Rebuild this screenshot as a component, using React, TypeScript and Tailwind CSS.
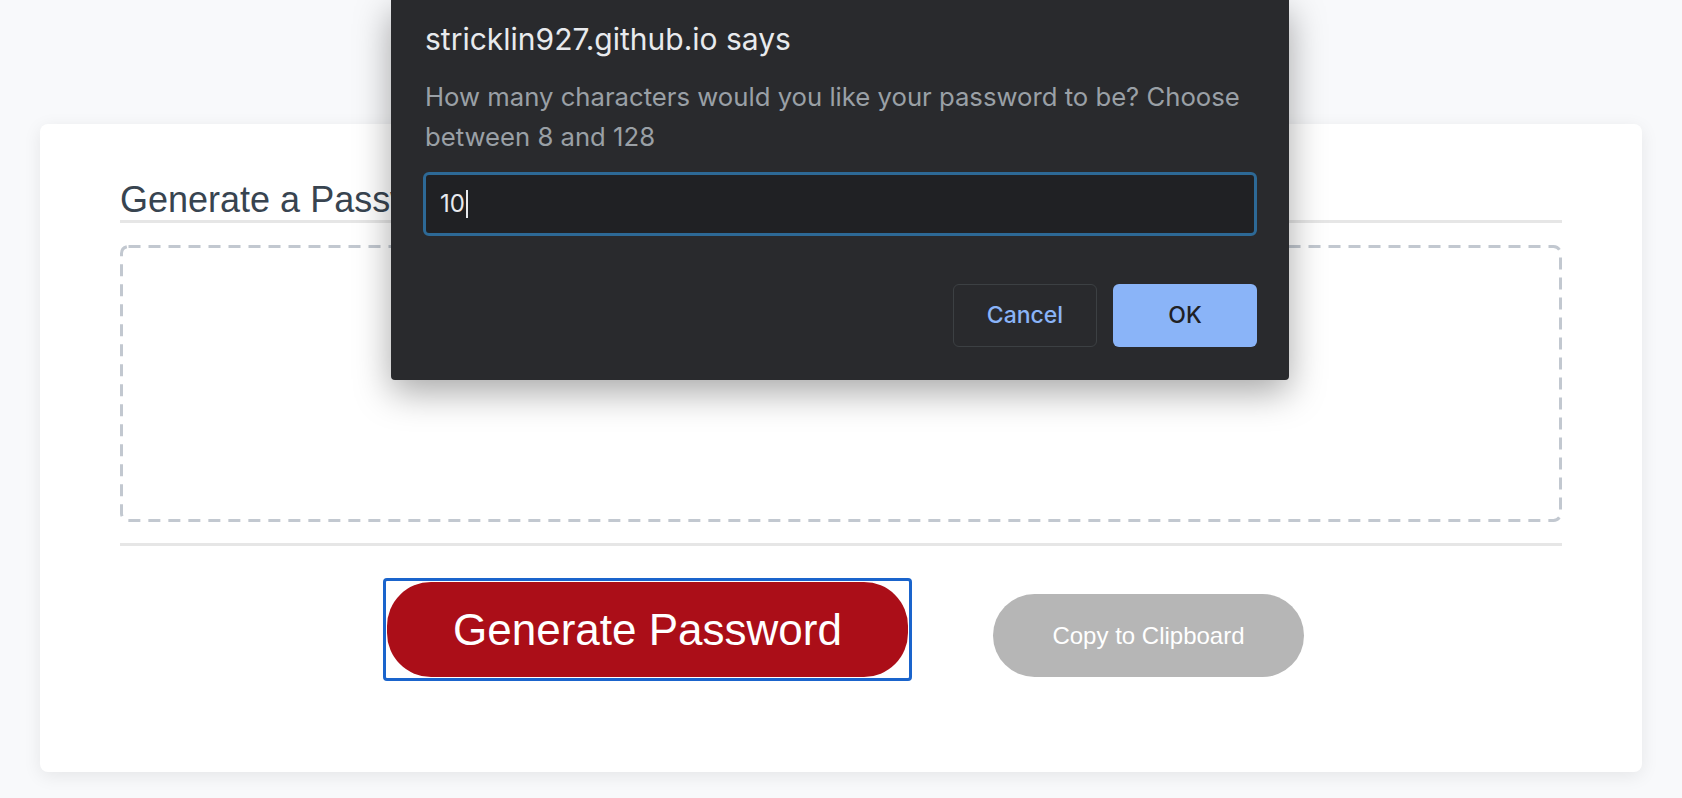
import React from "react";

export default function App() {
  return (
    <div className="relative min-h-[798px] w-full bg-[#f8f9fb] pt-[124px] pb-[26px] px-[40px] overflow-hidden">
      {/* Card */}
      <div className="bg-white rounded-lg shadow-[0_4px_18px_rgba(0,0,0,0.08)] h-[648px] px-[80px] pt-[56px]" style={{ fontFamily: '"Liberation Sans", Arial, sans-serif' }}>
        <h2 className="text-[36px] leading-[40px] text-[#384450] border-b-[3px] border-[#e6e6e6]">Generate a Password</h2>
        <div className="relative mt-[22px] h-[277px] rounded-[8px]">
          <svg className="absolute inset-0 w-full h-full" preserveAspectRatio="none">
            <rect x="1.5" y="1.5" width="calc(100% - 3px)" height="calc(100% - 3px)" rx="7" ry="7" fill="none" stroke="#c2c8d0" strokeWidth="3" strokeDasharray="12 8" style={{ width: "calc(100% - 3px)", height: "calc(100% - 3px)" }} />
          </svg>
        </div>
        <div className="mt-[21px] h-[3px] bg-[#e6e6e6]"></div>
        <div className="mt-[32px] flex justify-center items-start pl-[5px]">
          <div className="border-[3px] border-[#1a64cc] rounded-[4px] p-px">
            <button className="block w-[521px] h-[95px] rounded-[44px] bg-[#ab0e18] text-white text-[44px] leading-none">Generate Password</button>
          </div>
          <button className="ml-[81px] mt-[16px] w-[311px] h-[83px] rounded-full bg-[#b6b6b6] text-white text-[24px] leading-none">Copy to Clipboard</button>
        </div>
      </div>

      {/* Dialog */}
      <div className="absolute left-[391px] top-0 w-[898px] h-[380px] bg-[#292a2d] rounded-b-[4px] shadow-[0_12px_36px_rgba(0,0,0,0.35)] px-[32px]" style={{ fontFamily: 'Inter, "Noto Sans", sans-serif' }}>
        <div className="pt-[21px] pl-[2px] text-[30px] leading-[36px] text-[#e8eaed]">stricklin927.github.io says</div>
        <div className="mt-[20px] pl-[2px] text-[25.7px] leading-[40px] text-[#9aa0a6] pr-[4px]">How many characters would you like your password to be? Choose between 8 and 128</div>
        <div className="mt-[15px] h-[64px] w-[834px] rounded-[6px] border-[3px] border-[#2d6996] bg-[#202124] flex items-center pl-[14px]">
          <span className="text-[24px] text-[#e8eaed]">10</span>
          <span className="w-[2px] h-[28px] bg-[#e8eaed] ml-[1px]"></span>
        </div>
        <div className="mt-[48px] flex justify-end gap-[16px]">
          <button className="w-[144px] h-[63px] rounded-[6px] border border-[#3c4043] text-[#8ab4f8] text-[23px] font-medium">Cancel</button>
          <button className="w-[144px] h-[63px] rounded-[6px] bg-[#8ab4f8] text-[#202124] text-[23px] font-medium">OK</button>
        </div>
      </div>
    </div>
  );
}
